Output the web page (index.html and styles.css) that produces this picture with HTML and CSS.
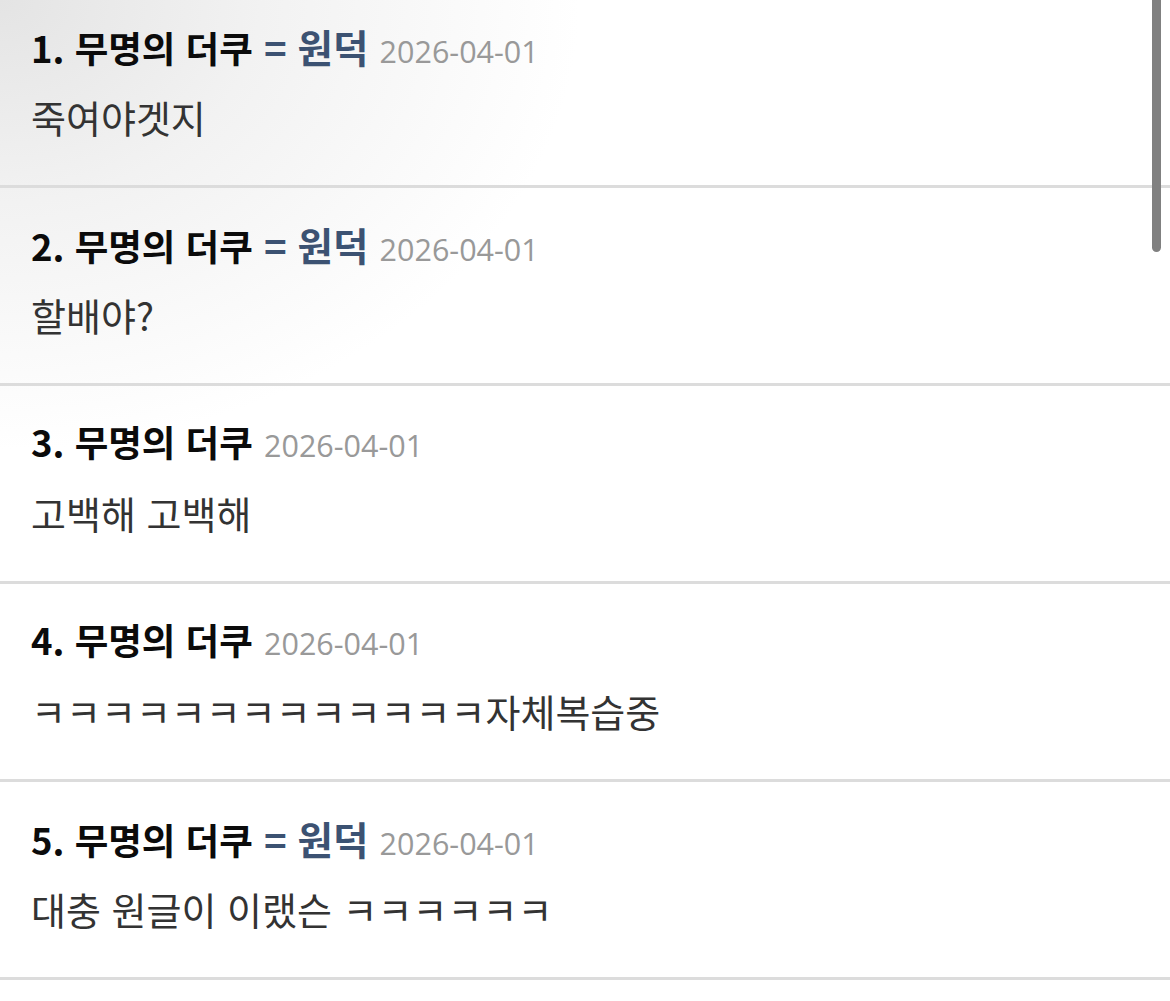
FILE: index.html
```html
<!DOCTYPE html>
<html lang="ko">
<head>
<meta charset="utf-8">
<title>댓글</title>
<link rel="stylesheet" href="styles.css">
</head>
<body>
<div class="page">
  <ul class="list">
    <li class="item">
      <div class="title"><span class="name">1. 무명의 더쿠</span> <span class="op">= 원덕</span> <span class="date">2026-04-01</span></div>
      <div class="text">죽여야겟지</div>
    </li>
    <li class="item">
      <div class="title"><span class="name">2. 무명의 더쿠</span> <span class="op">= 원덕</span> <span class="date">2026-04-01</span></div>
      <div class="text">할배야?</div>
    </li>
    <li class="item">
      <div class="title"><span class="name">3. 무명의 더쿠</span> <span class="date">2026-04-01</span></div>
      <div class="text">고백해 고백해</div>
    </li>
    <li class="item">
      <div class="title"><span class="name">4. 무명의 더쿠</span> <span class="date">2026-04-01</span></div>
      <div class="text">ㅋㅋㅋㅋㅋㅋㅋㅋㅋㅋㅋㅋㅋ자체복습중</div>
    </li>
    <li class="item">
      <div class="title"><span class="name">5. 무명의 더쿠</span> <span class="op">= 원덕</span> <span class="date">2026-04-01</span></div>
      <div class="text">대충 원글이 이랬슨 ㅋㅋㅋㅋㅋㅋ</div>
    </li>
  </ul>
  <div class="scrollbar"></div>
</div>
</body>
</html>
```
FILE: styles.css
```css
html, body {
  margin: 0;
  padding: 0;
  background: #fff;
}
body {
  font-family: "Noto Sans CJK KR", "Noto Sans", sans-serif;
  overflow: hidden;
  height: 1001px;
}
.page {
  position: relative;
  height: 1001px;
  overflow: hidden;
  background:
    radial-gradient(ellipse 580px 450px at 0 0, #e4e4e4 0%, #f2f2f2 45%, rgba(255,255,255,0) 100%),
    #fff;
}
.list {
  list-style: none;
  margin: -10px 0 0 0;
  padding: 0;
}
.item {
  box-sizing: border-box;
  height: 198px;
  padding: 31px 30px 0 31px;
  border-bottom: 3px solid #dcdcdc;
}
.title {
  font-size: 36.5px;
  line-height: 50px;
  height: 50px;
  white-space: nowrap;
}
.name {
  font-weight: 700;
  color: #0b0b0b;
}
.op {
  font-weight: 700;
  color: #3c5272;
  font-size: 38.5px;
  margin-left: 1px;
}
.date {
  font-family: "Open Sans", "Noto Sans", sans-serif;
  font-size: 30.5px;
  color: #999;
  font-weight: 500;
  margin-left: 1px;
}
.text {
  margin-top: 21px;
  font-size: 38px;
  line-height: 50px;
  color: #333;
  white-space: nowrap;
}
.scrollbar {
  position: absolute;
  top: 0;
  right: 9px;
  width: 9px;
  height: 252px;
  background: #808080;
  border-radius: 0 0 5px 5px;
}
```
